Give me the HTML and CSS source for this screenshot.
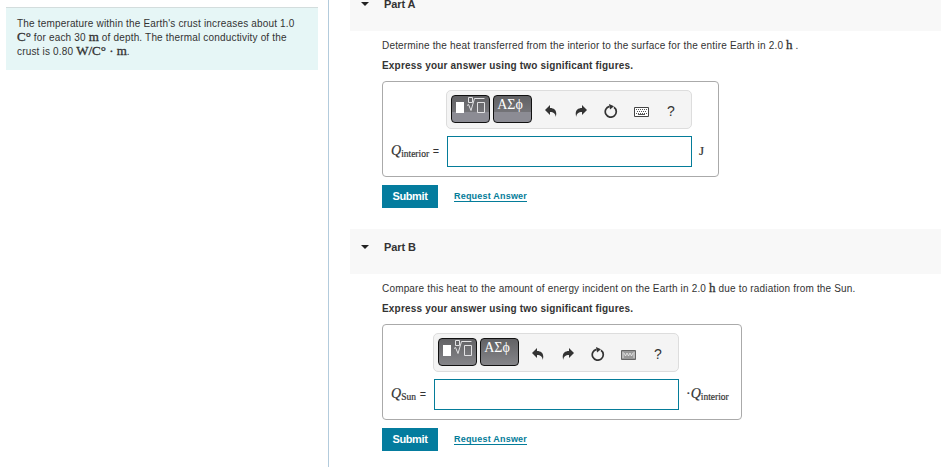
FILE: index.html
```
<!DOCTYPE html>
<html lang="en">
<head>
  <meta charset="UTF-8" />
  <title>Heat from the Earth's interior</title>
  <meta name="viewport" content="width=device-width, initial-scale=1.0" />
  <link rel="stylesheet" href="styles.css">
</head>
<body>
  <!-- shared toolbar icons -->
  <svg class="sprite" aria-hidden="true">
    <symbol id="template" viewBox="0 0 39 28">
      <path d="M5 7h8v11H5z" fill="#fff"/>
      <path d="M17.500 2.500h4v5h-4zM16 10.500l1.500-1 2.500 6 3.500-12h10M26.500 7.500h7v10h-7z" fill="none" stroke="#e2e2e4"/>
    </symbol>
    <symbol id="undo" viewBox="0 0 12 12">
      <path d="M0 5L5 0v3c5 0 7.500 3.500 5.700 9C10.500 8.500 8.500 7 5 7v3z"/>
    </symbol>
    <symbol id="redo" viewBox="0 0 12 12">
      <path d="M12 5L7 0v3C2 3-.5 6.500 1.300 12 1.500 8.500 3.500 7 7 7v3z"/>
    </symbol>
    <symbol id="reset" viewBox="0 0 14 14">
      <path d="M10 3.200A5.500 5.500 0 1 1 5.500 2.300" fill="none" stroke="#333" stroke-width="1.700"/>
      <path d="M5 0l5 2.300L6 5.500z"/>
    </symbol>
    <symbol id="keyboard" viewBox="0 0 15 10">
      <path d="M.5.5h14v9H.5z" fill="#fff" stroke="#444"/>
      <path d="M2 2.500h11M3 4.500h10M2 6.500h11" fill="none" stroke="#555" stroke-dasharray="1 1"/>
      <path d="M4 7.500h7" stroke="#555"/>
    </symbol>
    <symbol id="keyboard-dense" viewBox="0 0 15 10">
      <path d="M.5.5h14v9H.5z" fill="#999" stroke="#666"/>
      <path d="M2 2v6M13 2v6M3 3l1.500 3L6 3l1.500 3L9 3l1.500 3L12 3" fill="none" stroke="#eee" stroke-width=".8"/>
    </symbol>
  </svg>

  <div class="page">
    <aside class="sidebar">
      <div class="intro">
        <div>The temperature within the Earth's crust increases about 1.0</div>
        <div><span class="math">C°</span> for each 30 <span class="math">m</span> of depth. The thermal conductivity of the</div>
        <div>crust is 0.80 <span class="math">W/C° · m</span>.</div>
      </div>
    </aside>

    <main class="content">
      <section class="part">
        <h2 class="part-header"><span class="arrow"></span>Part A</h2>
        <div class="part-body">
          <p class="question">Determine the heat transferred from the interior to the surface for the entire Earth in 2.0 <span class="math">h</span> .</p>
          <p class="instruction">Express your answer using two significant figures.</p>
          <div class="answer answer-a">
            <label class="symbol" for="heat"><i>Q</i><span class="sub">interior</span><span class="equals">=</span></label>
            <div class="editor">
              <div class="toolbar">
                <button class="key key-icon split"><svg width="39" height="28"><use href="#template"/></svg></button>
                <button class="key split">ΑΣϕ</button>
                <div class="tools">
                  <svg width="12" height="12"><use href="#undo"/></svg>
                  <svg width="12" height="12"><use href="#redo"/></svg>
                  <svg width="14" height="14"><use href="#reset"/></svg>
                  <svg class="keyboard" width="15" height="10"><use href="#keyboard"/></svg>
                  <span class="help">?</span>
                </div>
              </div>
              <input type="text" id="heat">
            </div>
            <span class="unit joule">J</span>
          </div>
          <div class="actions">
            <button class="submit">Submit</button>
            <a class="request" href="#">Request Answer</a>
          </div>
        </div>
      </section>

      <section class="part">
        <h2 class="part-header"><span class="arrow"></span>Part B</h2>
        <div class="part-body">
          <p class="question">Compare this heat to the amount of energy incident on the Earth in 2.0 <span class="math">h</span> due to radiation from the Sun.</p>
          <p class="instruction">Express your answer using two significant figures.</p>
          <div class="answer answer-b">
            <label class="symbol" for="ratio"><i>Q</i><span class="sub">Sun</span><span class="equals">=</span></label>
            <div class="editor">
              <div class="toolbar">
                <button class="key key-icon"><svg width="39" height="28"><use href="#template"/></svg></button>
                <button class="key">ΑΣϕ</button>
                <div class="tools">
                  <svg width="12" height="12"><use href="#undo"/></svg>
                  <svg width="12" height="12"><use href="#redo"/></svg>
                  <svg width="14" height="14"><use href="#reset"/></svg>
                  <svg class="keyboard" width="15" height="10"><use href="#keyboard-dense"/></svg>
                  <span class="help">?</span>
                </div>
              </div>
              <input type="text" id="ratio">
            </div>
            <span class="unit">·<i>Q</i><span class="sub">interior</span></span>
          </div>
          <div class="actions">
            <button class="submit">Submit</button>
            <a class="request" href="#">Request Answer</a>
          </div>
        </div>
      </section>
    </main>
  </div>
</body>
</html>
```

FILE: styles.css
```
* {
  box-sizing: border-box;
}
body {
  margin: 0;
  background: #fff;
  color: #333;
  font-family: "Liberation Sans", Arial, sans-serif;
  font-size: 10px;
}
.sprite {
  display: none;
}
.page {
  display: flex;
  height: 467px;
  overflow: hidden;
}
.sidebar {
  width: 329px;
  padding: 7px 10px 0 6px;
  border-right: 1px solid #b3cbdc;
}
.intro {
  height: 63px;
  padding: 9px 0 0 11px;
  border-top: 1px solid #d3dddd;
  background: #e6f6f6;
  line-height: 14px;
  letter-spacing: 0.175px;
  white-space: nowrap;
}
.math {
  font-family: "Liberation Serif", "Times New Roman", serif;
  font-size: 13px;
  line-height: 1px;
  letter-spacing: 0;
  -webkit-text-stroke: 0.3px #333;
}
.content {
  flex: 1;
  margin-left: 21px;
  margin-top: -14px;
}
.part {
  height: 243px;
}
.part-header {
  display: flex;
  align-items: center;
  height: 45px;
  margin: 0;
  padding: 0 0 9px 11px;
  background: #f8f8f8;
  font-size: 11px;
  letter-spacing: -0.1px;
}
.arrow {
  width: 8px;
  margin-right: 15px;
  border: 4px solid transparent;
  border-top-color: #222;
  border-bottom: 0;
}
.part-body {
  padding: 5px 0 0 32px;
}
.question,
.instruction {
  margin: 0;
  line-height: 20px;
  letter-spacing: 0.175px;
  white-space: nowrap;
}
.instruction {
  font-weight: bold;
  letter-spacing: 0.19px;
}
.answer {
  display: flex;
  height: 96px;
  margin-top: 5px;
  padding: 8px 0 0 8px;
  border: 1px solid #aaa;
  border-radius: 4px;
}
.answer-a {
  width: 337px;
}
.answer-b {
  width: 360px;
}
.symbol,
.unit {
  padding-top: 53px;
  font-family: "Liberation Serif", "Times New Roman", serif;
  font-size: 14px;
  line-height: 16px;
  white-space: nowrap;
  -webkit-text-stroke: 0.2px #333;
}
.symbol {
  width: 55px;
}
.answer-b .symbol {
  width: 42px;
}
.sub {
  position: relative;
  top: 2px;
  font-size: 9.5px;
}
.equals {
  margin-left: 4px;
  font-family: "Liberation Sans", Arial, sans-serif;
  font-size: 10px;
}
.editor {
  width: 246px;
}
.toolbar {
  display: flex;
  height: 39px;
  padding: 4px;
  border: 1px solid #ddd;
  border-radius: 5px;
  background: #f4f4f4;
}
.key {
  width: 39px;
  height: 28px;
  margin-right: 3px;
  padding: 0 5px 9px 0;
  border: 1px solid #111;
  border-radius: 4px;
  background: linear-gradient(#626265, #858589);
  color: #fff;
  font-family: "Liberation Serif", "Times New Roman", serif;
  font-size: 14px;
  line-height: 17px;
}
.key.split {
  background: linear-gradient(#616164, #747478 62%, #8c8c94 63%, #8c8c94);
}
.key-icon {
  padding: 0;
}
.key svg {
  display: block;
  margin: -1px;
}
.tools {
  display: grid;
  grid-template-columns: 31px 30px 30px 31px 28px;
  align-items: center;
  justify-items: center;
  height: 32px;
  fill: #333;
}
.keyboard {
  margin-top: 2px;
}
.help {
  font-size: 14px;
}
.editor input {
  display: block;
  width: 245px;
  height: 31px;
  margin: 7px 0 0 1px;
  border: 1px solid #047c99;
  border-radius: 0;
  background: #fff;
}
.unit {
  margin-left: 7px;
}
.joule {
  font-size: 13px;
}
.actions {
  display: flex;
  align-items: center;
  height: 23px;
  margin-top: 8px;
}
.submit {
  width: 56px;
  height: 23px;
  margin-right: 16px;
  padding: 0 0 1px;
  border: 0;
  background: #047c9e;
  color: #fff;
  font: bold 11px "Liberation Sans", Arial, sans-serif;
  letter-spacing: -0.4px;
}
.request {
  padding-bottom: 2px;
  color: #047c99;
  font-size: 9px;
  font-weight: bold;
  letter-spacing: 0.2px;
  text-underline-offset: 2px;
}
```
